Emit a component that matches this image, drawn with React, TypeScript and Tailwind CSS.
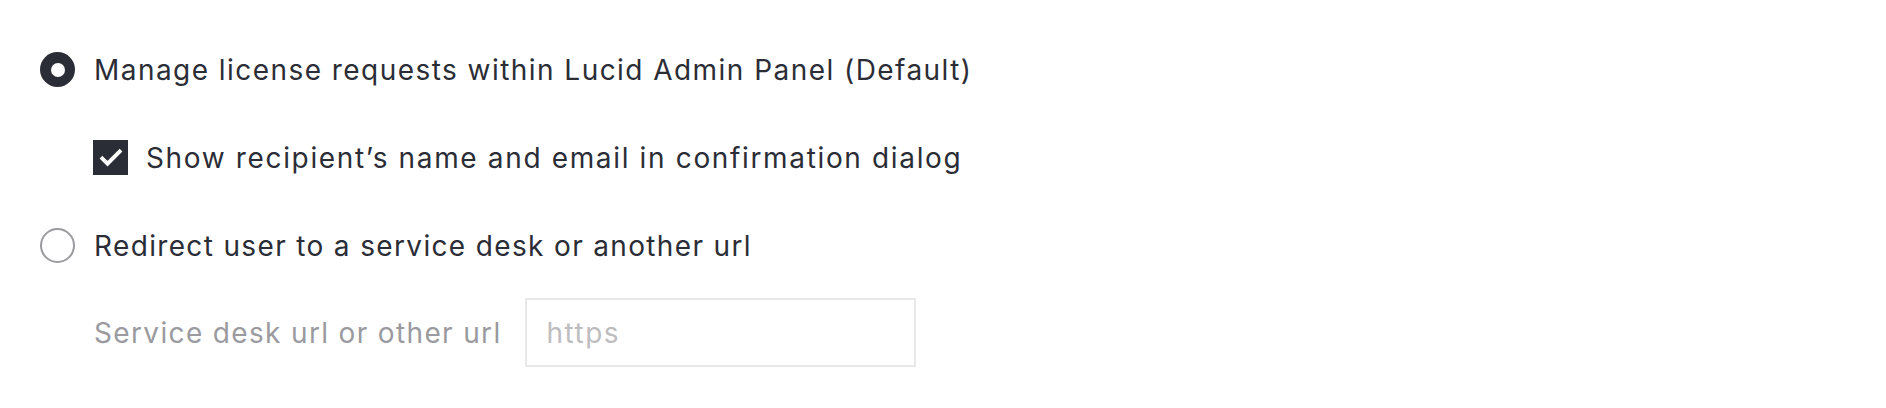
export default function App() {
  return (
    <div
      className="w-[1886px] h-[408px] bg-white pl-[40px] pt-[52px] text-[#2b2d36]"
      style={{ fontFamily: 'Inter, "Noto Sans", sans-serif' }}
    >
      <div className="flex flex-col">
        <label className="flex items-center h-[35px] gap-[19px]">
          <span className="w-[35px] h-[35px] rounded-full bg-[#2b2d36] flex items-center justify-center">
            <span className="w-[14px] h-[14px] rounded-full bg-white" />
          </span>
          <span className="text-[28px] leading-none tracking-[1.45px]">Manage license requests within Lucid Admin Panel (Default)</span>
        </label>

        <label className="flex items-center h-[35px] gap-[18px] ml-[53px] mt-[53px]">
          <span className="w-[35px] h-[35px] bg-[#2b2d36] flex items-center justify-center">
            <svg width="26" height="26" viewBox="0 0 24 24" fill="none">
              <path d="M4 12.5l4.8 4.8L20 6" stroke="white" strokeWidth="3.6" strokeLinecap="square" />
            </svg>
          </span>
          <span className="text-[28px] leading-none tracking-[1.65px]">Show recipient’s name and email in confirmation dialog</span>
        </label>

        <label className="flex items-center h-[35px] gap-[19px] mt-[53px]">
          <span className="w-[35px] h-[35px] rounded-full border-2 border-[#9b9b9f] bg-white" />
          <span className="text-[28px] leading-none tracking-[1.35px]">Redirect user to a service desk or another url</span>
        </label>

        <div className="flex items-center gap-[23px] ml-[54px] mt-[35px]">
          <span className="text-[28px] leading-none tracking-[1.35px] text-[#9a9a9f]">Service desk url or other url</span>
          <input
            disabled
            placeholder="https"
            className="w-[391px] h-[69px] border-2 border-[#e8e8e8] bg-white px-[20px] text-[28px] tracking-[1.45px] placeholder:text-[#bdbdc0] outline-none"
          />
        </div>
      </div>
    </div>
  );
}
